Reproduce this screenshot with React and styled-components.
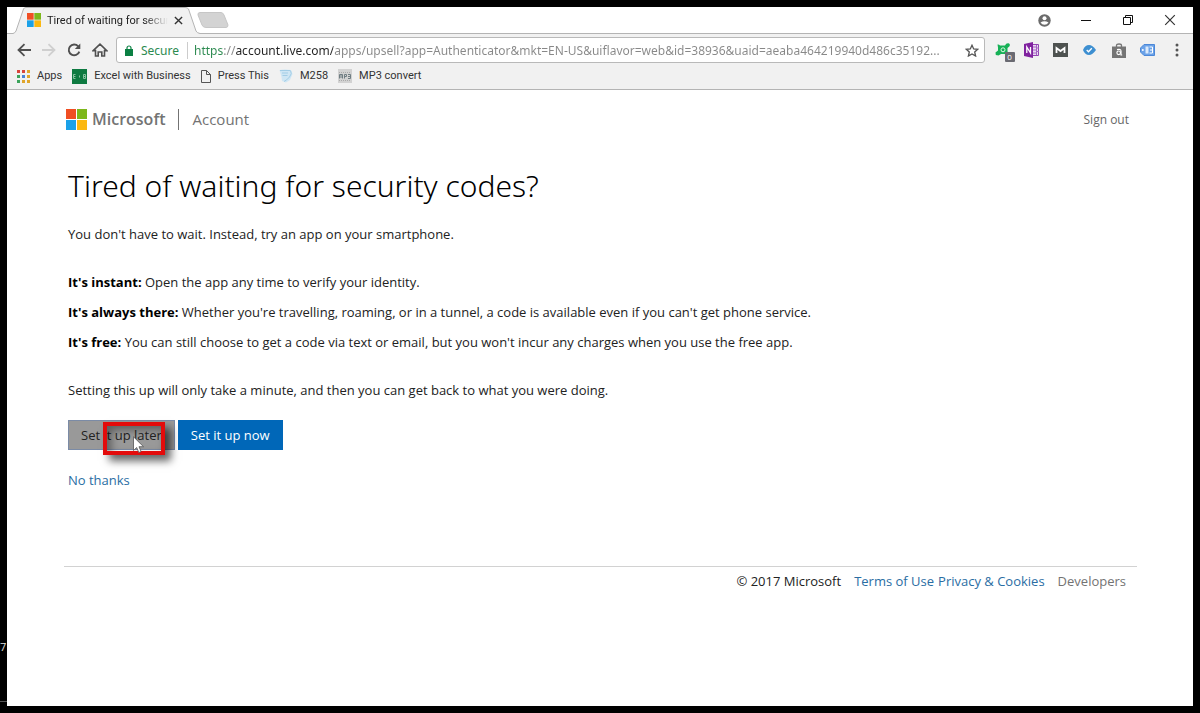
import styled, { createGlobalStyle, css } from "styled-components";
import { useState } from "react";


const bookmarks = [
    { label: "Apps", Icon: AppsIcon },
    { label: "Excel with Business", Icon: ExcelIcon },
    { label: "Press This", Icon: PageIcon },
    { label: "M258", Icon: ScrollIcon },
    { label: "MP3 convert", Icon: Mp3Icon },
];

const extensions = [
    { label: "Phone extension", Icon: FrogIcon },
    { label: "OneNote", Icon: OneNoteIcon },
    { label: "Mail", Icon: MIcon },
    { label: "Verified", Icon: CheckIcon },
    { label: "Shopping", Icon: BagIcon },
    { label: "Tag", Icon: TagIcon },
    { label: "Menu", Icon: DotsIcon },
];

const reasons = [
    { title: "It's instant:", text: "Open the app any time to verify your identity." },
    { title: "It's always there:", text: "Whether you're travelling, roaming, or in a tunnel, a code is available even if you can't get phone service." },
    { title: "It's free:", text: "You can still choose to get a code via text or email, but you won't incur any charges when you use the free app." },
];

export default function App () {

    const [url, setUrl] = useState("https://account.live.com/apps/upsell?app=Authenticator&mkt=EN-US&uiflavor=web&id=38936&uaid=aeaba464219940d486c35192...");

    return (
        <>
        <GlobalStyle />
        <DesktopStyle>
            <ClockStyle>7</ClockStyle>
            <TaskbarEdgeStyle />
            <WindowStyle>
                <TabStripStyle>
                    <TabStyle>
                        <TabShape />
                        <MicrosoftLogo size={14} />
                        <TabTitleStyle>Tired of waiting for secur</TabTitleStyle>
                        <IconButtonStyle aria-label="Close tab"><CloseIcon size={9} width={1.5} /></IconButtonStyle>
                    </TabStyle>
                    <NewTabStyle aria-label="New tab"><NewTabShape /></NewTabStyle>
                    <WindowButtonsStyle>
                        <IconButtonStyle aria-label="Profile"><ProfileIcon /></IconButtonStyle>
                        <IconButtonStyle aria-label="Minimize"><MinimizeIcon /></IconButtonStyle>
                        <IconButtonStyle aria-label="Restore"><RestoreIcon /></IconButtonStyle>
                        <IconButtonStyle aria-label="Close"><CloseIcon size={12} width={1} /></IconButtonStyle>
                    </WindowButtonsStyle>
                </TabStripStyle>

                <ToolbarStyle>
                    <NavStyle>
                        <IconButtonStyle aria-label="Back"><ArrowIcon color="#505050" /></IconButtonStyle>
                        <IconButtonStyle aria-label="Forward"><ArrowIcon color="#cfcfcf" flip /></IconButtonStyle>
                        <IconButtonStyle aria-label="Reload"><ReloadIcon /></IconButtonStyle>
                        <IconButtonStyle aria-label="Home"><HomeIcon /></IconButtonStyle>
                    </NavStyle>
                    <AddressStyle>
                        <LockIcon />
                        <SecureStyle htmlFor="address">Secure</SecureStyle>
                        <UrlStyle id="address" value={url} spellCheck={false} onChange={e => setUrl(e.target.value)} />
                        <IconButtonStyle aria-label="Bookmark"><StarIcon /></IconButtonStyle>
                    </AddressStyle>
                    <ExtensionsStyle>
                        {extensions.map(({ label, Icon }) => (
                            <IconButtonStyle key={label} aria-label={label}><Icon /></IconButtonStyle>
                        ))}
                    </ExtensionsStyle>
                </ToolbarStyle>

                <BookmarksStyle>
                    {bookmarks.map(({ label, Icon }) => (
                        <BookmarkStyle key={label} href="#"><Icon />{label}</BookmarkStyle>
                    ))}
                </BookmarksStyle>

                <PageStyle>
                    <HeaderStyle>
                        <MicrosoftLogo size={21} />
                        <BrandStyle>Microsoft</BrandStyle>
                        <AccountStyle href="#">Account</AccountStyle>
                        <SignOutStyle href="#">Sign out</SignOutStyle>
                    </HeaderStyle>

                    <MainStyle>
                        <TitleStyle>Tired of waiting for security codes?</TitleStyle>
                        <TextStyle>You don't have to wait. Instead, try an app on your smartphone.</TextStyle>
                        <ReasonsStyle>
                            {reasons.map(reason => (
                                <TextStyle key={reason.title}><b>{reason.title}</b> {reason.text}</TextStyle>
                            ))}
                        </ReasonsStyle>
                        <TextStyle>Setting this up will only take a minute, and then you can get back to what you were doing.</TextStyle>
                        <ActionsStyle>
                            <ActionButtonStyle>
                                Set it up later
                                <HighlightStyle />
                                <PointerStyle><Pointer /></PointerStyle>
                            </ActionButtonStyle>
                            <ActionButtonStyle $primary>Set it up now</ActionButtonStyle>
                        </ActionsStyle>
                        <LinkStyle href="#">No thanks</LinkStyle>
                    </MainStyle>

                    <FooterStyle>
                        <span>© 2017 Microsoft</span>
                        <FooterLinksStyle>
                            <LinkStyle href="#">Terms of Use</LinkStyle>
                            <LinkStyle href="#">Privacy &amp; Cookies</LinkStyle>
                        </FooterLinksStyle>
                        <LinkStyle href="#" $muted>Developers</LinkStyle>
                    </FooterStyle>
                </PageStyle>
            </WindowStyle>
        </DesktopStyle>
        </>
    )
}

function MicrosoftLogo ({ size }) {
    return (
        <svg width={size} height={size} viewBox="0 0 21 21">
            <path fill="#f04e23" d="M0 0h10v10H0z" />
            <path fill="#7db71b" d="M11 0h10v10H11z" />
            <path fill="#1ba1e8" d="M0 11h10v10H0z" />
            <path fill="#fbb811" d="M11 11h10v10H11z" />
        </svg>
    )
}

function TabShape () {
    return (
        <svg width="188" height="27" viewBox="0 0 188 27">
            <path d="M0 26.5H1Q3 26 4 24L11.500 2Q12 .5 14 .5H173Q175.500 .5 176.500 2L184 24Q185 26 188 26.500V27H0z" fill="#f1f1f1" />
            <path d="M0 26.5H1Q3 26 4 24L11.500 2Q12 .5 14 .5H173Q175.500 .5 176.500 2L184 24Q185 26 188 26.500" fill="none" stroke="#b4b4b4" />
        </svg>
    )
}

function NewTabShape () {
    return (
        <svg width="32" height="16" viewBox="0 0 32 16">
            <path d="M3 .5H24Q26 .5 27 3L31 13Q31 15.500 29 15.500H9Q6 15.500 5 13L1 3Q.5 .5 3 .5z" fill="#d3d3d3" stroke="#c6c6c6" />
        </svg>
    )
}

function CloseIcon ({ size, width }) {
    return (
        <svg width={size} height={size} viewBox="0 0 10 10">
            <path d="M1 1l8 8M9 1L1 9" stroke="#333" strokeWidth={width} />
        </svg>
    )
}

function ProfileIcon () {
    return (
        <svg width="13" height="13" viewBox="0 0 13 13">
            <circle cx="6.500" cy="6.500" r="6.200" fill="#6b6b6b" />
            <circle cx="6.500" cy="4.200" r="2" fill="#fff" />
            <path d="M2.500 8.600Q6.500 5.900 10.500 8.600Q9 10.800 6.500 10.800T2.500 8.600z" fill="#fff" />
        </svg>
    )
}

function MinimizeIcon () {
    return <svg width="10" height="10"><path d="M0 5.500H10" stroke="#111" /></svg>
}

function RestoreIcon () {
    return (
        <svg width="10" height="10" fill="none" stroke="#111">
            <path d="M.5 2.500h7v7h-7zM2.500 2.500v-2h7v7h-2" />
        </svg>
    )
}

function ArrowIcon ({ color, flip }) {
    return (
        <svg width="14" height="14" viewBox="0 0 14 14" fill="none" stroke={color} strokeWidth="1.800">
            <path d={flip ? "M0 7h12M6.500 1.200L12.500 7l-6 5.800" : "M14 7H2M7.500 1.200L1.500 7l6 5.800"} />
        </svg>
    )
}

function ReloadIcon () {
    return (
        <svg width="14" height="14" viewBox="0 0 14 14">
            <path d="M11.200 3.300A5.400 5.400 0 1 0 12.300 8.600" fill="none" stroke="#505050" strokeWidth="1.900" />
            <path d="M13.300 .5V6H7.800z" fill="#505050" />
        </svg>
    )
}

function HomeIcon () {
    return (
        <svg width="16" height="14" viewBox="0 0 16 14" fill="none" stroke="#505050" strokeWidth="1.600">
            <path d="M1.200 7.600L8 1.200l6.800 6.400H12.500V13H9.800V9H6.200v4H3.500V7.600z" />
        </svg>
    )
}

function LockIcon () {
    return (
        <svg width="8" height="11" viewBox="0 0 8 11">
            <path d="M0 4h8v7H0z" fill="#0b8043" />
            <path d="M2 4.500V3a2 2 0 0 1 4 0v1.500" fill="none" stroke="#0b8043" strokeWidth="1.200" />
        </svg>
    )
}

function StarIcon () {
    return (
        <svg width="14" height="13" viewBox="0 0 14 13">
            <path d="M7 1.200l1.700 3.700 4 .4-3 2.700.9 4L7 9.900 3.400 12l.9-4-3-2.700 4-.4z" fill="none" stroke="#555" strokeWidth="1.300" />
        </svg>
    )
}

function FrogIcon () {
    return (
        <BadgedStyle>
            <svg width="16" height="14" viewBox="0 0 16 14">
                <path d="M2.500 1.500Q4 1 5 2.500H10Q11 0 13.500 .3 15.500 1 14.500 3.200L12.500 5V8.500L14 10.500 12 12 9.500 11H6L3.500 12.500 .8 12 .5 9.500 3 7.500V4.500z" fill="#16b156" />
                <circle cx="8" cy="6.800" r="2" fill="none" stroke="#d9f7e3" />
            </svg>
            <BadgeStyle>0</BadgeStyle>
        </BadgedStyle>
    )
}

function OneNoteIcon () {
    return (
        <svg width="16" height="16" viewBox="0 0 16 16">
            <path d="M8 2.500h6.500v11H8z" fill="#ead9f1" stroke="#9343b3" />
            <path d="M9 5h3M9 8h3M9 11h3M12.500 3v10M13 6h2M13 9.500h2" stroke="#a564c2" />
            <path d="M0 2l9-2v16l-9-2z" fill="#80229f" />
            <path d="M2.800 11V5l3.700 6V5" fill="none" stroke="#fff" strokeWidth="1.300" />
        </svg>
    )
}

function MIcon () {
    return (
        <svg width="15" height="14" viewBox="0 0 15 14">
            <path d="M0 0h15v14H0z" fill="#4e5250" />
            <path d="M3.500 10V5l4 3 4-3v5" fill="none" stroke="#fff" strokeWidth="1.800" />
        </svg>
    )
}

function CheckIcon () {
    return (
        <svg width="13" height="10" viewBox="0 0 13 10">
            <path d="M0 5Q2 0 6 0q3.500 0 7 5-3.500 5-7 5Q2 10 0 5z" fill="#3d8fd1" />
            <path d="M3.700 5l1.800 1.800 3.300-3.500" fill="none" stroke="#fff" strokeWidth="1.300" />
        </svg>
    )
}

function BagIcon () {
    return (
        <svg width="14" height="15" viewBox="0 0 14 15">
            <path d="M4.500 4V2.500q0-1.500 2.500-1.500t2.500 1.500V4" fill="none" stroke="#777" strokeWidth="1.300" />
            <path d="M0 3.500h14V15H0z" fill="#757575" />
            <circle cx="6.700" cy="9.800" r="1.800" fill="none" stroke="#fff" strokeWidth="1.200" />
            <path d="M5 6.600Q9 5.600 9 8v4h1.200" fill="none" stroke="#fff" strokeWidth="1.200" />
        </svg>
    )
}

function TagIcon () {
    return (
        <svg width="15" height="12" viewBox="0 0 15 12">
            <path d="M4 .5h10.500v11H4L.5 8V4z" fill="#6ba2e8" stroke="#4c88d8" />
            <path d="M5.500 2.500h3v7h-3z" fill="#dceafb" />
            <path d="M9.500 3H12.500V9H9.500M10 6h2" fill="none" stroke="#fff" />
            <circle cx="2.800" cy="6" r="1" fill="#fff" />
        </svg>
    )
}

function DotsIcon () {
    return (
        <svg width="4" height="14" fill="#555">
            <circle cx="2" cy="2" r="1.500" />
            <circle cx="2" cy="7" r="1.500" />
            <circle cx="2" cy="12" r="1.500" />
        </svg>
    )
}

function AppsIcon () {
    const colors = ["#d9453b", "#d9453b", "#e0a52b", "#3ba35a", "#4b82d6", "#e0a52b", "#3ba35a", "#e0a52b", "#e0a52b"];
    return (
        <svg width="13" height="13">
            {colors.map((color, i) => (
                <rect key={i} x={(i % 3) * 5} y={Math.floor(i / 3) * 5} width="3" height="3" fill={color} />
            ))}
        </svg>
    )
}

function ExcelIcon () {
    return (
        <svg width="15" height="15">
            <path d="M0 0h15v15H0z" fill="#0e7a41" />
            <path d="M3.500 5.500H1.500v4h2M1.500 7.500h2M7.500 6.500v2M11.500 5.500h2v4h-2zM11.500 7.500h2" fill="none" stroke="#86c3a0" />
        </svg>
    )
}

function PageIcon () {
    return (
        <svg width="10" height="13" fill="none" stroke="#555">
            <path d="M.5 .5h5l4 4v8h-9zM5.500 .5v4h4" />
        </svg>
    )
}

function ScrollIcon () {
    return (
        <svg width="14" height="14" viewBox="0 0 14 14">
            <path d="M.5 1Q6 0 12 1L13.500 5 11 11 7 13.500 3 12 2.500 8z" fill="#cfe6f4" />
            <path d="M1 1.500h10M3 4h6M3.500 6.500h5M11.500 1.500q2 3-1 6.500T5 12.500" fill="none" stroke="#a3cde6" />
        </svg>
    )
}

function Mp3Icon () {
    return (
        <svg width="14" height="14">
            <path d="M0 0h14v14H0z" fill="#d2d2d2" />
            <path d="M1.500 9.500v-4h3v4M3 5v4M6.500 9.500v-4h2v2h-2M10 5.500h2.500v4H10M10 7.500h2" fill="none" stroke="#6f7d82" />
            <path d="M1 3.500h12M1 11.500h12" stroke="#aaa" strokeDasharray="1 1" />
        </svg>
    )
}

function Pointer () {
    return (
        <svg width="12" height="18" viewBox="0 0 12 18">
            <path d="M.5 .8v13.700l3.200-3 2.100 5 2.300-1-2.100-4.800h4.500z" fill="#fff" stroke="#555" strokeWidth=".8" />
        </svg>
    )
}

const GlobalStyle = createGlobalStyle`
    * {
        box-sizing: border-box;
    }
    body {
        margin: 0;
        background-color: #000;
        font-family: "Open Sans", "Noto Sans", sans-serif;
        font-size: 13px;
        color: #222;
    }
    button, input {
        font: inherit;
    }
    a {
        text-decoration: none;
    }
    svg {
        display: block;
        flex: none;
    }
`

const DesktopStyle = styled.div`
    display: flex;
    min-height: 100vh;
    padding: 7px;
    position: relative;
`

const ClockStyle = styled.span`
    position: absolute;
    left: 0;
    bottom: 58px;
    font-size: 11px;
    line-height: 16px;
    color: #ddd;
`

const TaskbarEdgeStyle = styled.div`
    position: absolute;
    left: 0;
    bottom: 11px;
    width: 7px;
    height: 1px;
    background-color: #555;
`

const WindowStyle = styled.div`
    flex: 1;
    min-width: 0;
    display: flex;
    flex-direction: column;
    background-color: #fff;
`

const TabStripStyle = styled.div`
    display: flex;
    align-items: center;
    height: 27px;
    padding: 0 2px 0 5px;
    border-bottom: 1px solid #b4b4b4;
`

const TabStyle = styled.div`
    display: flex;
    align-items: center;
    gap: 6px;
    width: 188px;
    height: 27px;
    padding: 0 17px 0 15px;
    position: relative;
    z-index: 1;

    > svg:first-child {
        position: absolute;
        left: 0;
        top: 0;
    }
    > * {
        position: relative;
    }
`

const TabTitleStyle = styled.span`
    flex: 1;
    min-width: 0;
    white-space: nowrap;
    font-family: "Roboto", sans-serif;
    font-size: 11px;
    mask-image: linear-gradient(to right, #000 80%, transparent);
`

const IconButtonStyle = styled.button`
    display: flex;
    align-items: center;
    justify-content: center;
    flex: none;
    padding: 0;
    border: none;
    background: none;
`

const NewTabStyle = styled(IconButtonStyle)`
    margin-left: -3px;
`

const WindowButtonsStyle = styled.div`
    display: flex;
    margin-left: auto;

    button {
        width: 42px;
    }
`

const ToolbarStyle = styled.div`
    display: flex;
    align-items: center;
    height: 32px;
    padding: 0 2px 0 10px;
    background-color: #f1f1f1;
`

const NavStyle = styled.div`
    display: flex;
    gap: 11px;
    margin-right: 8px;
`

const AddressStyle = styled.div`
    flex: 1;
    min-width: 0;
    display: flex;
    align-items: center;
    height: 26px;
    padding: 0 5px 0 8px;
    border: 1px solid #b9b9b9;
    border-radius: 3px;
    background-color: #fff;
    font-family: "Noto Sans", sans-serif;
    font-size: 12px;
`

const SecureStyle = styled.label`
    margin-left: 8px;
    padding-right: 8px;
    border-right: 1px solid #ccc;
    color: #2c8a50;
`

const UrlStyle = styled.input`
    flex: 1;
    min-width: 0;
    padding: 0;
    margin: 0 6px;
    border: none;
    outline: none;
    text-overflow: ellipsis;
    color: transparent;
    caret-color: #222;
    background: linear-gradient(to right, #2c8a50 30px, #888 30px 42px, #222 42px 139px, #888 139px);
    background-clip: text;
`

const ExtensionsStyle = styled.div`
    display: flex;

    button {
        width: 29px;
    }
    button:first-child {
        margin-left: 3px;
    }
`

const BadgedStyle = styled.span`
    position: relative;
`

const BadgeStyle = styled.span`
    position: absolute;
    left: 10px;
    top: 9px;
    width: 10px;
    height: 10px;
    border-radius: 1px;
    background-color: #6a6a72;
    color: #fff;
    font-size: 8px;
    line-height: 10px;
    text-align: center;
`

const BookmarksStyle = styled.nav`
    display: flex;
    align-items: center;
    gap: 10px;
    height: 24px;
    padding: 0 10px 3px;
    border-bottom: 1px solid #b4b4b4;
    background-color: #f1f1f1;
`

const BookmarkStyle = styled.a`
    display: flex;
    align-items: center;
    gap: 7px;
    font-family: "Roboto", sans-serif;
    font-size: 11px;
    line-height: 18px;
    color: #333;
`

const PageStyle = styled.div`
    flex: 1;
    padding: 18px 56px 20px 57px;
`

const HeaderStyle = styled.header`
    display: flex;
    align-items: center;
    height: 22px;
    padding: 0 8px 0 2px;
`

const BrandStyle = styled.span`
    margin-left: 5px;
    padding-right: 12px;
    border-right: 1px solid #737373;
    font-size: 16px;
    font-weight: 600;
    line-height: 21px;
    color: #737373;
`

const AccountStyle = styled.a`
    margin-left: 14px;
    font-size: 15px;
    color: #737373;
`

const SignOutStyle = styled.a`
    margin-left: auto;
    font-size: 12px;
    color: #666;
`

const MainStyle = styled.main`
    display: flex;
    flex-direction: column;
    align-items: flex-start;
    padding: 36px 4px 0;
`

const TitleStyle = styled.h1`
    margin: 0 0 18px;
    font-family: "Noto Sans", sans-serif;
    font-size: 30px;
    font-weight: 300;
    line-height: 40px;
    color: #000;
`

const TextStyle = styled.p`
    margin: 0;
    line-height: 20px;

    b {
        color: #000;
    }
`

const ReasonsStyle = styled.div`
    display: flex;
    flex-direction: column;
    gap: 10px;
    margin: 28px 0;
`

const ActionsStyle = styled.div`
    display: flex;
    gap: 3px;
    margin: 20px 0;
`

const ActionButtonStyle = styled.button`
    position: relative;
    height: 30px;
    padding: 0 12px;
    border: 1px solid #7b8ba6;
    background-color: #999;
    color: #222;

    ${props => props.$primary && css`
        border-color: #0067b8;
        background-color: #0067b8;
        color: #fff;
    `}
`

const HighlightStyle = styled.span`
    position: absolute;
    left: 34px;
    top: 1px;
    width: 62px;
    height: 33px;
    border: 4px solid #e30b0b;
    box-shadow: 6px 6px 8px rgba(0, 0, 0, 0.6), inset 4px 4px 8px rgba(0, 0, 0, 0.4);
`

const PointerStyle = styled.span`
    position: absolute;
    left: 64px;
    top: 15px;
`

const LinkStyle = styled.a`
    line-height: 20px;
    color: ${props => props.$muted ? '#737373' : '#2a6da3'};
`

const FooterStyle = styled.footer`
    display: flex;
    justify-content: flex-end;
    gap: 13px;
    margin-top: 76px;
    padding: 4px 11px 0;
    border-top: 1px solid #d2d2d2;
    line-height: 20px;
`

const FooterLinksStyle = styled.span`
    display: flex;
    gap: 4px;
`
